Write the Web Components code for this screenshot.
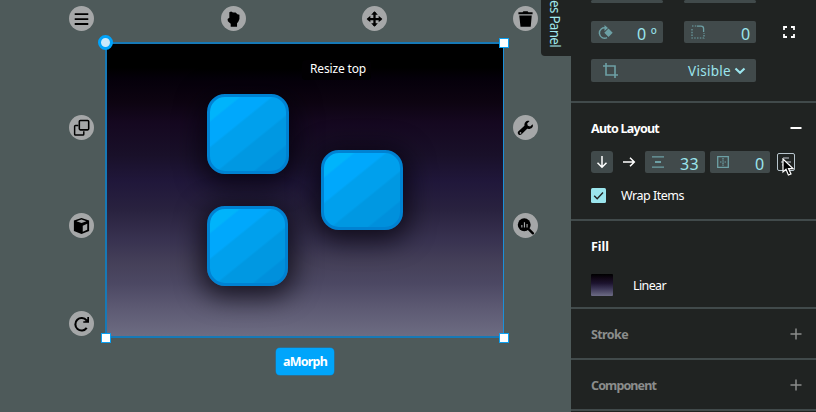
<!DOCTYPE html>
<html lang="en">
<head>
<meta charset="utf-8">
<title>Design editor</title>
<style>
html,body{margin:0;width:816px;height:412px;overflow:hidden;background:#4e5a5a}
body{font:12.5px "Noto Sans","Open Sans",sans-serif;color:#fff}
</style>
</head>
<body>
<editor-app></editor-app>
<script>
const define = (name, html, setup) => customElements.define(name, class extends HTMLElement {
  connectedCallback() {
    if (this.shadowRoot) return;
    const t = document.createElement('template');
    t.innerHTML = html;
    this.attachShadow({mode: 'open'}).append(t.content.cloneNode(true));
    if (setup) setup(this, this.shadowRoot);
  }
});

const icons = {
  menu: '<path d="M5.500 7.800h13M5.500 12.600h13M5.500 17.300h13" stroke="#000" stroke-width="1.900"/>',
  hand: '<path d="M8 6 9.700 5.200 11.500 6.200 14 6.300 15.800 7.800 17.700 8.300 17.700 12.500 16.600 15.200 15.400 16.500V20H9.300V17L6.600 14.600 6.300 12.500 8 11.300Z"/>',
  move: '<path d="M12 6v13M5.500 12.500h13" stroke="#000" stroke-width="2.200"/><path d="M12 5 8.800 8.500h6.400ZM12 20l-3.200-3.500h6.400ZM4.500 12.500 8 9.300v6.400ZM19.500 12.500 16 9.300v6.400Z"/>',
  trash: '<path d="M5.200 6h4l.8-1h4l.8 1h4v1.900H5.200ZM6 9h12l-1 11H7.200Z"/>',
  copy: '<path d="M9 10H6.200q-.8 0-.8.8v7.600q0 .8.8.8h7.200q.8 0 .8-.8V15.500" fill="none" stroke="#000" stroke-width="1.400"/><rect x="9.900" y="5.300" width="9" height="9" rx="1" fill="none" stroke="#000" stroke-width="1.500"/>',
  wrench: '<path d="M18.800 8.800 16.500 11 14.200 10.300 13.600 8.100 15.900 5.700C13 5 10.600 7.200 11 10.200L5 15.800C3.700 17.500 5.700 20.300 8 18.800L13.600 13.200C17 14 20.200 11.700 18.800 8.800ZM6.900 16.500a.8.800 0 1 1 0 1.500.8.800 0 0 1 0-1.500Z" fill-rule="evenodd"/>',
  cube: '<path d="M12 4.800 19.300 7.300V17.200L12 20.200 4.700 17.200V7.300Z"/><path d="m7.200 8 4.800-1.700L16.700 8 12 9.700Z" fill="#a5a7a8"/><path d="M13.200 12.200 17.500 10.400V16L13.200 18Z" fill="#a5a7a8"/>',
  search: '<circle cx="10.800" cy="11.300" r="6.200"/><path d="m14.800 15.300 4.300 4.200" stroke="#000" stroke-width="2.300" stroke-linecap="round"/><path d="M8.500 11.500v2.500M11 8.800V14M13.500 10.500V14" stroke="#a5a7a8" stroke-width="1.100"/>',
  redo: '<path d="M16.800 9A6 6 0 1 0 17 16.200" fill="none" stroke="#000" stroke-width="2"/><path d="M19.200 5.800V11.300H13.700V9.900H15.600L17.600 8V5.800Z"/>'
};
const svg = (w, h, body, view) => `<svg width="${w}" height="${h}" viewBox="${view || `0 0 ${w} ${h}`}">${body}</svg>`;

/* Text fitted to the length given in pixels, along its own reading direction. */
define('fit-text', `<style>:host{display:block;white-space:nowrap;line-height:1.2}span{display:inline-block}</style><span><slot></slot></span>`, (host, root) => {
  const span = root.querySelector('span'), target = +host.getAttribute('w');
  const box = span.getBoundingClientRect();
  const natural = host.hasAttribute('turned') ? box.height : box.width;
  span.style.letterSpacing = (target - natural) / host.textContent.length + 'px';
});

define('tool-button', `<style>:host{position:absolute;width:25px;height:25px;border-radius:50%;background:#a5a7a8}svg{display:block}</style><div></div>`, (host, root) => {
  host.style.left = host.getAttribute('x') + 'px';
  host.style.top = host.getAttribute('y') + 'px';
  root.querySelector('div').innerHTML = svg(25, 25, icons[host.getAttribute('icon')], '0 0 24 24');
});

define('morph-tile', `<style>:host{position:absolute;box-sizing:border-box;width:82px;height:80px;border-radius:18px;border:3px solid #0082d2;
background:linear-gradient(141deg,#00b4fb 17%,#00a8fc 19% 36%,#00a0ed 38% 58%,#0098e2 60% 80%,#0090dc 82%);box-shadow:0 5px 26px 6px rgba(4,0,10,.72)}</style>`);

define('resize-handle', `<style>:host{position:absolute;box-sizing:border-box;width:10px;height:10px;background:#fff;border:1px solid #0aa0f2}
:host([round]){width:15px;height:15px;border:3px solid #00a3fb;border-radius:50%;background:#c9e8fb}</style>`);

define('editor-canvas', `<style>
:host{position:relative;display:block;width:571px;height:412px;overflow:hidden;background:#4e5a5a}
.frame{position:absolute;box-sizing:border-box;left:105px;top:42px;width:399px;height:296px;border:solid #1779b6;border-width:2px 1px 2px 2px;border-right-color:#1b90da;overflow:hidden;
background:linear-gradient(#000 0 8%,#05000a 12%,#0d0411 20%,#150820 27%,#191029 38%,#20173a 47%,#29223f 57%,#383250 67%,#454059 75%,#4c4863 82%,#5c5972 90%,#6d6c82 100%)}
.tip{position:absolute;left:195px;top:16px;padding:2px 5px 4px 8px;border-radius:4px;background:#020003;font-size:12px}
.tag{position:absolute;left:276px;top:348px;width:58px;height:27px;border-radius:4px;background:#00a5fb;display:flex;align-items:center;justify-content:center;font-weight:700;box-shadow:0 0 0 .5px #1480be}
.tab{position:absolute;left:541px;top:-8px;width:30px;height:64px;background:#202322;border-radius:0 0 0 4px;color:#a0e9ed}
.tab fit-text{position:absolute;right:8px;top:8px;writing-mode:vertical-rl;font-size:13.500px}
</style>
<div class="frame">
<morph-tile style="left:100px;top:50px"></morph-tile><morph-tile style="left:214px;top:106px"></morph-tile><morph-tile style="left:100px;top:162px;width:81px"></morph-tile>
<div class="tip"><fit-text w="56">Resize top</fit-text></div></div>
<resize-handle round style="left:98px;top:35px"></resize-handle><resize-handle style="left:499px;top:38px"></resize-handle>
<resize-handle style="left:101px;top:333px"></resize-handle><resize-handle style="left:499px;top:333px"></resize-handle>
<tool-button icon="menu" x="69" y="6"></tool-button><tool-button icon="hand" x="220.500" y="6"></tool-button>
<tool-button icon="move" x="362" y="6"></tool-button><tool-button icon="trash" x="513.300" y="6"></tool-button>
<tool-button icon="copy" x="69" y="114.600"></tool-button><tool-button icon="wrench" x="513.300" y="114.600"></tool-button>
<tool-button icon="cube" x="69" y="213"></tool-button><tool-button icon="search" x="513.300" y="213"></tool-button>
<tool-button icon="redo" x="69" y="311"></tool-button>
<div class="tag"><fit-text w="44">aMorph</fit-text></div>
<div class="tab"><fit-text turned w="47">es Panel</fit-text></div>`);

define('value-field', `<style>:host{box-sizing:border-box;display:flex;align-items:center;justify-content:space-between;height:22px;padding:0 6px 0 7px;border-radius:2px;background:#414a4b;color:#9be5ed;font-size:16px}
::slotted(svg){display:block;flex:none}::slotted(fit-text){position:relative;top:2px;line-height:1}</style><slot></slot>`);

define('panel-section', `<style>:host{box-sizing:border-box;display:block;border-bottom:2px solid #414a4b;padding:1px 14px 0 20px}
header{display:flex;align-items:center;justify-content:space-between;height:49px;font-weight:700}
:host([muted]) header{color:#8b8d8c}svg{display:block;margin-bottom:2px}</style><header><slot name="title"></slot><i></i></header><slot></slot>`, (host, root) => {
  const kind = host.getAttribute('action');
  if (kind) root.querySelector('i').innerHTML = svg(12, 12, kind === 'minus' ? '<path d="M.5 6h11" stroke="#fff" stroke-width="2"/>' : '<path d="M.5 6h11M6 .5v11" stroke="#8b8d8c" stroke-width="1.500"/>');
});

define('style-panel', `<style>
:host{display:flex;flex-direction:column;width:245px;height:412px;background:#202322;overflow:hidden}
.top{box-sizing:border-box;height:103px;border-bottom:2px solid #414a4b;padding-left:20px;display:grid;grid-template:3px 40px 39px / 72px 72px 20px;column-gap:21px;align-content:start}
.top .cut{height:3px}.top>.r2{margin-top:18px}
.top>.wide{grid-column:1/3;margin-top:16px;height:23px;padding:0 10px 0 12px;font-size:13.500px}
.top>.wide fit-text{top:1px;margin-left:auto;margin-right:3px}
.top>svg{margin:23px 0 0 6px}
.row{display:flex;align-items:center}.arrows{height:22px;margin-top:-2px}
.dir{width:22px;height:22px;border-radius:3px;background:#414a4b;display:grid;place-items:center}
.right{width:32px;display:grid;place-items:center}.arrows value-field{width:60px;margin-right:5px}
.fit{box-sizing:border-box;width:18px;height:18px;border:1px solid #b7c4cc;border-radius:2px;margin-left:2px;position:relative;display:grid;place-items:center}
.cursor{position:absolute;left:4px;top:4px}
.wrap{height:16px;margin-top:14px;gap:15px}.fill{height:22px;gap:20px;margin-top:3px}
.swatch{width:22px;height:22px;border-radius:1px;background:linear-gradient(#000,#100716 20%,#1c132e 42%,#3a3454 65%,#6d6c85)}
svg{display:block}
</style>
<div class="top">
<value-field class="cut"></value-field><value-field class="cut"></value-field><b></b>
<value-field class="r2">${svg(15,15,'<path d="M8 3A5.200 5.200 0 1 0 9 12.600" fill="none" stroke="#6da0a5" stroke-width="1.500"/><path d="M6.500 0 10 3 6.500 6ZM10.500 3.500 14.700 7.700 10.500 11.900 6.300 7.700Z" fill="#6da0a5"/>')}<fit-text w="20">0 º</fit-text></value-field>
<value-field class="r2">${svg(14,14,'<path d="M1 4v9h12V8" fill="none" stroke="#6da0a5" stroke-width="1.200" stroke-dasharray="1.500 1.300"/><path d="M1 1h5" stroke="#6da0a5" stroke-width="1.200" stroke-dasharray="1.500 1.300"/><path d="M6 1.200h4q2.600 0 2.600 2.600V7" fill="none" stroke="#6da0a5" stroke-width="1.300"/>')}<fit-text w="9">0</fit-text></value-field>
${svg(12,12,'<path d="M1 4V1h3M8 1h3v3M11 8v3H8M4 11H1V8" fill="none" stroke="#fff" stroke-width="1.800"/>')}
<value-field class="wide">${svg(15,15,'<path d="M3 0v12h12M0 3h12v12" fill="none" stroke="#6da0a5" stroke-width="1.600"/>')}<fit-text w="43">Visible</fit-text>${svg(12,8,'<path d="m1.500 1.500 4.500 4.200 4.500-4.200" fill="none" stroke="#9be5ed" stroke-width="2.200"/>')}</value-field>
</div>
<panel-section action="minus" style="height:118px"><fit-text slot="title" w="68">Auto Layout</fit-text>
<div class="row arrows"><div class="dir">${svg(12,14,'<path d="M6 1v11M1.500 7.800 6 12.300l4.500-4.500" fill="none" stroke="#fff" stroke-width="1.500"/>')}</div>
<div class="right">${svg(14,12,'<path d="M1 6h11M8 1.700 12.300 6 8 10.300" fill="none" stroke="#fff" stroke-width="1.500"/>')}</div>
<value-field>${svg(12,12,'<path d="M0 .8h12M0 11.200h12" stroke="#6da0a5" stroke-width="1.300"/><path d="M3 6h6" stroke="#6da0a5" stroke-width="2"/>')}<fit-text w="19">33</fit-text></value-field>
<value-field>${svg(12,12,'<path d="M.7.700h10.600v10.600H.7Z" fill="none" stroke="#6da0a5" stroke-width="1.300"/><path d="M6 2v3M6 7v3M3 6h6" stroke="#6da0a5" stroke-width="1.200" stroke-dasharray="1.500 .8"/>')}<fit-text w="9">0</fit-text></value-field>
<div class="fit">${svg(10,10,'<path d="M2 1h6M0 5h10M1 8h8" stroke="#8d9398" stroke-width="1.500"/>')}<div class="cursor">${svg(12,18,'<path d="M1 1v13l3-2.700L6.400 17 9 15.900 6.500 10.600H11Z" fill="#000" stroke="#fff" stroke-width="1.200"/>')}</div></div></div>
<div class="row wrap">${svg(15,15,'<rect width="15" height="15" rx="1.500" fill="#9be5ed"/><path d="m3.200 7.700 3 3 5.800-6.200" fill="none" stroke="#202322" stroke-width="1.400"/>')}<fit-text w="63">Wrap Items</fit-text></div></panel-section>
<panel-section style="height:88px"><fit-text slot="title" w="18">Fill</fit-text><div class="row fill"><div class="swatch"></div><fit-text w="33">Linear</fit-text></div></panel-section>
<panel-section muted action="plus" style="height:51px"><fit-text slot="title" w="37">Stroke</fit-text></panel-section>
<panel-section muted action="plus" style="height:51px"><fit-text slot="title" w="65">Component</fit-text></panel-section>`);

define('editor-app', `<style>:host{display:flex;width:816px;height:412px}</style><editor-canvas></editor-canvas><style-panel></style-panel>`);
</script>
</body>
</html>
